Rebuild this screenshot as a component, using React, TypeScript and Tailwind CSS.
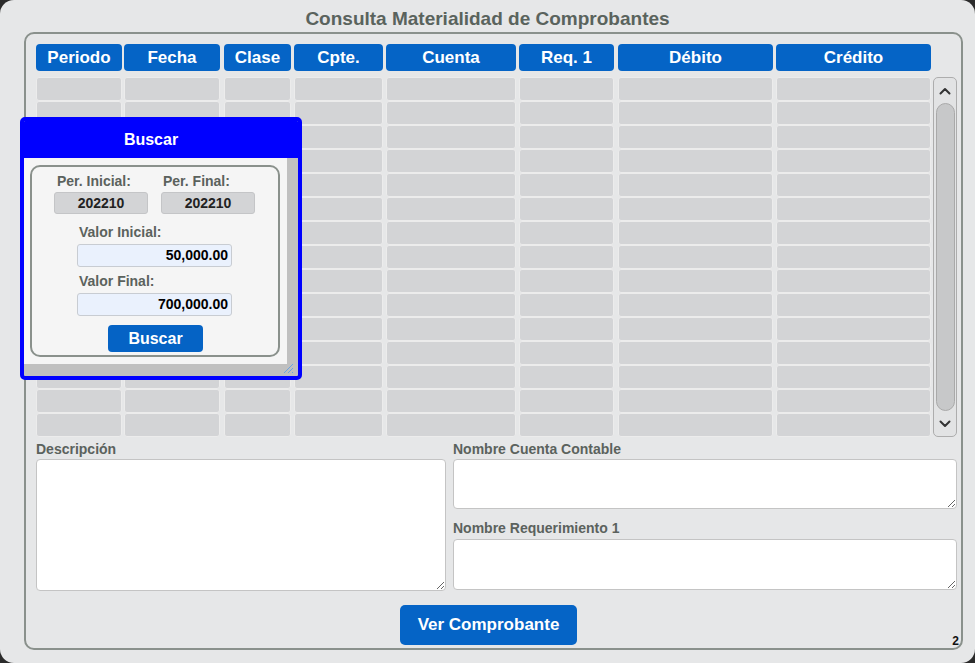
import type { ReactNode } from 'react'

const cols = [
  { label: 'Periodo', cls: 'w-[86px]' },
  { label: 'Fecha', cls: 'w-[96px] ml-[2px]' },
  { label: 'Clase', cls: 'w-[67px] ml-[4px]' },
  { label: 'Cpte.', cls: 'w-[89px] ml-[3px]' },
  { label: 'Cuenta', cls: 'w-[130px] ml-[3px]' },
  { label: 'Req. 1', cls: 'w-[95px] ml-[3px]' },
  { label: 'Débito', cls: 'w-[155px] ml-[4px]' },
  { label: 'Crédito', cls: 'w-[155px] ml-[3px]' },
]

const rows = Array.from({ length: 15 }, (_, i) => i)

function Chevron({ up }: { up?: boolean }) {
  return (
    <svg width="12" height="8" viewBox="0 0 12 8" className="shrink-0">
      <polyline
        points={up ? '1.5,6.5 6,2 10.5,6.5' : '1.5,1.5 6,6 10.5,1.5'}
        fill="none"
        stroke="#333"
        strokeWidth="2"
        strokeLinecap="round"
        strokeLinejoin="round"
      />
    </svg>
  )
}

function Label({ children, className = '' }: { children: ReactNode; className?: string }) {
  return <div className={`text-[14px] font-bold leading-[16px] text-[#5b625d] ${className}`}>{children}</div>
}

function BuscarDialog() {
  return (
    <div className="absolute left-[20px] top-[117px] w-[282px] h-[263px] rounded-[5px] border-4 border-[#0000ff] bg-[#c0c0c0] flex flex-col overflow-hidden">
      <div className="h-[37px] shrink-0 bg-[#0000ff] flex items-center justify-center pr-[20px] text-white text-[16px] font-bold">
        Buscar
      </div>
      <div className="relative flex-1">
        <div className="w-[263px] h-[206px] bg-[#f5f5f5] pt-[7px] pl-[6px]">
          <div className="w-[250px] h-[192px] rounded-[10px] border-2 border-[#8a918c] flex flex-col">
            <div className="flex pl-[22px] pt-[6px]">
              <div className="w-[94px] flex flex-col">
                <Label className="pl-[3px]">Per. Inicial:</Label>
                <div className="mt-[3px] h-[22px] rounded-[3px] border border-[#c4c5c7] bg-[#d3d4d6] flex items-center justify-center text-[14px] font-bold text-[#222]">
                  202210
                </div>
              </div>
              <div className="w-[94px] ml-[13px] flex flex-col">
                <Label className="pl-[2px]">Per. Final:</Label>
                <div className="mt-[3px] h-[22px] rounded-[3px] border border-[#c4c5c7] bg-[#d3d4d6] flex items-center justify-center text-[14px] font-bold text-[#222]">
                  202210
                </div>
              </div>
            </div>
            <div className="pl-[45px] flex flex-col">
              <Label className="mt-[10px] pl-[2px]">Valor Inicial:</Label>
              <div className="mt-[4px] w-[155px] h-[23px] rounded-[3px] border border-[#c8ccd2] bg-[#eaf1fd] flex items-center justify-end pr-[3px] text-[14px] font-bold text-black">
                50,000.00
              </div>
              <Label className="mt-[6px] pl-[2px]">Valor Final:</Label>
              <div className="mt-[4px] w-[155px] h-[23px] rounded-[3px] border border-[#c8ccd2] bg-[#eaf1fd] flex items-center justify-end pr-[3px] text-[14px] font-bold text-black">
                700,000.00
              </div>
            </div>
            <div className="mt-[9px] ml-[76px] w-[95px] h-[27px] rounded-[4px] bg-[#0563c5] flex items-center justify-center text-white text-[16px] font-bold">
              Buscar
            </div>
          </div>
        </div>
        <svg width="12" height="12" viewBox="0 0 12 12" className="absolute right-[4px] bottom-[2px]">
          <line x1="11" y1="2" x2="2" y2="11" stroke="#6aa4e0" strokeWidth="1" />
          <line x1="11" y1="6" x2="6" y2="11" stroke="#6aa4e0" strokeWidth="1" />
          <line x1="11" y1="10" x2="10" y2="11" stroke="#6aa4e0" strokeWidth="1" />
        </svg>
      </div>
    </div>
  )
}

export default function App() {
  return (
    <div className="w-[975px] h-[663px] bg-[#2b2b2b] font-['Liberation_Sans',Arial,sans-serif]">
      <div className="relative w-full h-full rounded-[14px] bg-[#e6e7e8] overflow-hidden flex flex-col pt-[8px]">
        <div className="h-[22px] flex items-center justify-center text-[19px] font-bold text-[#5a635d]">
          Consulta Materialidad de Comprobantes
        </div>

        {/* Main panel */}
        <div className="relative ml-[24px] mt-[2px] w-[939px] h-[618px] rounded-[10px] border-2 border-[#8a918c] pl-[10px] pt-[10px] flex flex-col">
          {/* Header */}
          <div className="flex">
            {cols.map((c) => (
              <div
                key={c.label}
                className={`${c.cls} h-[27px] rounded-[4px] bg-[#0564c6] flex items-center justify-center text-white text-[17px] font-bold`}
              >
                {c.label}
              </div>
            ))}
          </div>

          {/* Body + scrollbar */}
          <div className="flex mt-[6px]">
            <div className="flex flex-col">
              {rows.map((r) => (
                <div key={r} className="flex">
                  {cols.map((c) => (
                    <div
                      key={c.label}
                      className={`${c.cls} h-[24px] rounded-[3px] border border-[#ececec] bg-[#d3d4d6]`}
                    />
                  ))}
                </div>
              ))}
            </div>
            <div className="ml-[2px] w-[24px] h-[360px] rounded-[5px] border border-[#adadad] bg-[#e2e3e4] flex flex-col items-center">
              <div className="h-[25px] flex items-center">
                <Chevron up />
              </div>
              <div className="w-[19px] flex-1 rounded-full border border-[#a9a9a9] bg-[#c7c8c9]" />
              <div className="h-[25px] flex items-center">
                <Chevron />
              </div>
            </div>
          </div>

          {/* Bottom fields */}
          <div className="flex mt-[4px]">
            <div className="w-[410px] flex flex-col">
              <Label>Descripción</Label>
              <textarea className="mt-[2px] w-[410px] h-[132px] rounded-[4px] border border-[#c4c4c4] bg-white outline-none" />
            </div>
            <div className="ml-[7px] w-[504px] flex flex-col">
              <Label>Nombre Cuenta Contable</Label>
              <textarea className="mt-[2px] w-[504px] h-[50px] rounded-[4px] border border-[#c4c4c4] bg-white outline-none" />
              <Label className="mt-[11px]">Nombre Requerimiento 1</Label>
              <textarea className="mt-[3px] w-[504px] h-[51px] rounded-[4px] border border-[#c4c4c4] bg-white outline-none" />
            </div>
          </div>

          <div className="mt-[14px] ml-[364px] w-[177px] h-[40px] rounded-[5px] bg-[#0564c6] flex items-center justify-center text-white text-[17px] font-bold">
            Ver Comprobante
          </div>

          <div className="absolute right-[2px] bottom-[0px] text-[12px] font-bold text-[#111] leading-[14px]">2</div>
        </div>

        <BuscarDialog />
      </div>
    </div>
  )
}
